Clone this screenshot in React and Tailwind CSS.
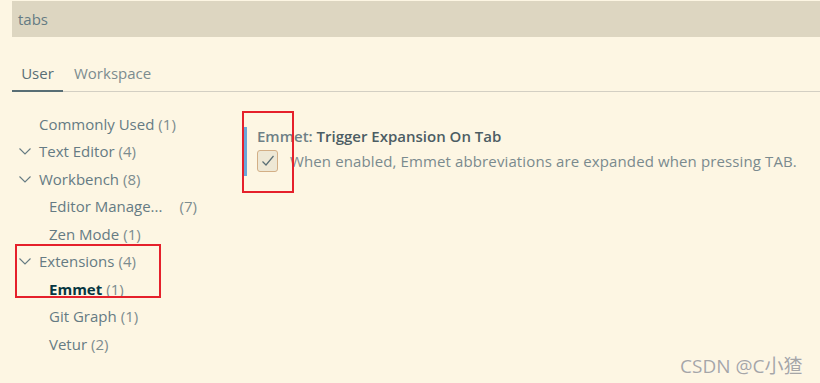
const tree = [
  { label: "Commonly Used", count: 1, level: 0, chevron: false },
  { label: "Text Editor", count: 4, level: 0, chevron: true },
  { label: "Workbench", count: 8, level: 0, chevron: true },
  { label: "Editor Manage...", count: 7, level: 1, gap: true },
  { label: "Zen Mode", count: 1, level: 1 },
  { label: "Extensions", count: 4, level: 0, chevron: true },
  { label: "Emmet", count: 1, level: 1, active: true },
  { label: "Git Graph", count: 1, level: 1 },
  { label: "Vetur", count: 2, level: 1 },
];

const Chevron = () => (
  <svg width="16" height="16" viewBox="0 0 16 16" fill="none" className="shrink-0">
    <path d="M2.5 5.5l5.5 5.5 5.5-5.5" stroke="#657b83" strokeWidth="1.1" />
  </svg>
);

const TreeRow = ({ item }) => (
  <div className="flex items-center h-[27.5px]">
    <div className="w-[27px] flex justify-end pr-[6px]">{item.chevron && <Chevron />}</div>
    <div className={item.level === 1 ? "pl-[10px] flex items-center" : "flex items-center"}>
      {item.active ? (
        <span className="font-bold text-[#073642]">{item.label}</span>
      ) : (
        <span className="text-[#657b83]">{item.label}</span>
      )}
      <span className={item.gap ? "ml-[17px] text-[#7c8c8f]" : "ml-[4px] text-[#7c8c8f]"}>({item.count})</span>
    </div>
  </div>
);

export default function App() {
  return (
    <div
      className="w-[820px] h-[383px] bg-[#fdf6e3] relative overflow-hidden pt-px pl-[12px]"
      style={{ fontFamily: '"Open Sans", "Noto Sans CJK SC", sans-serif' }}
    >
      <div className="h-[36px] bg-[#ddd6c1] flex items-center pl-[6px] text-[15px] text-[#657b83]">tabs</div>

      <div className="mt-[22px] flex border-b border-[#d3cfc3] text-[15px] h-[33px]">
        <div className="w-[51px] flex justify-center pt-[3px] text-[#586e75] border-b-2 border-[#586e75] -mb-px">User</div>
        <div className="pl-[11px] pt-[3px] text-[#7c8c8f]">Workspace</div>
      </div>

      <div className="flex mt-[18px]">
        <div className="w-[232px] text-[15px]">
          {tree.map((item) => (
            <TreeRow key={item.label} item={item} />
          ))}
        </div>

        <div className="pt-[16px] flex items-start">
          <div className="w-[3px] h-[49px] bg-[#6aa8d8] mt-[1px]" />
          <div className="pl-[10px]">
            <div className="text-[15px] font-semibold leading-[20px]">
              <span className="text-[#6e8086]">Emmet: </span>
              <span className="text-[#4c5d63]">Trigger Expansion On Tab</span>
            </div>
            <div className="flex items-center mt-[4px]">
              <div className="w-[21px] h-[22px] rounded-[3px] bg-[#eee8d5] border border-[#d3af86] flex items-center justify-center">
                <svg width="16" height="16" viewBox="0 0 16 16" fill="none">
                  <path d="M2.5 8.5l3.5 3.5 7.5-9" stroke="#586e75" strokeWidth="1.2" />
                </svg>
              </div>
              <span className="ml-[12px] text-[15px] tracking-[0.12px] text-[#7a8a8e]">
                When enabled, Emmet abbreviations are expanded when pressing TAB.
              </span>
            </div>
          </div>
        </div>
      </div>

      <div className="absolute left-[15px] top-[244px] w-[146px] h-[54px] border-2 border-[#e5202b]" />
      <div className="absolute left-[242px] top-[111px] w-[52px] h-[82px] border-2 border-[#e5202b]" />

      <div className="absolute left-[680px] top-[352px] text-[19px] text-[#a6a6a6] [text-shadow:0_0_1px_#fff]">
        CSDN @C小猹
      </div>
    </div>
  );
}
